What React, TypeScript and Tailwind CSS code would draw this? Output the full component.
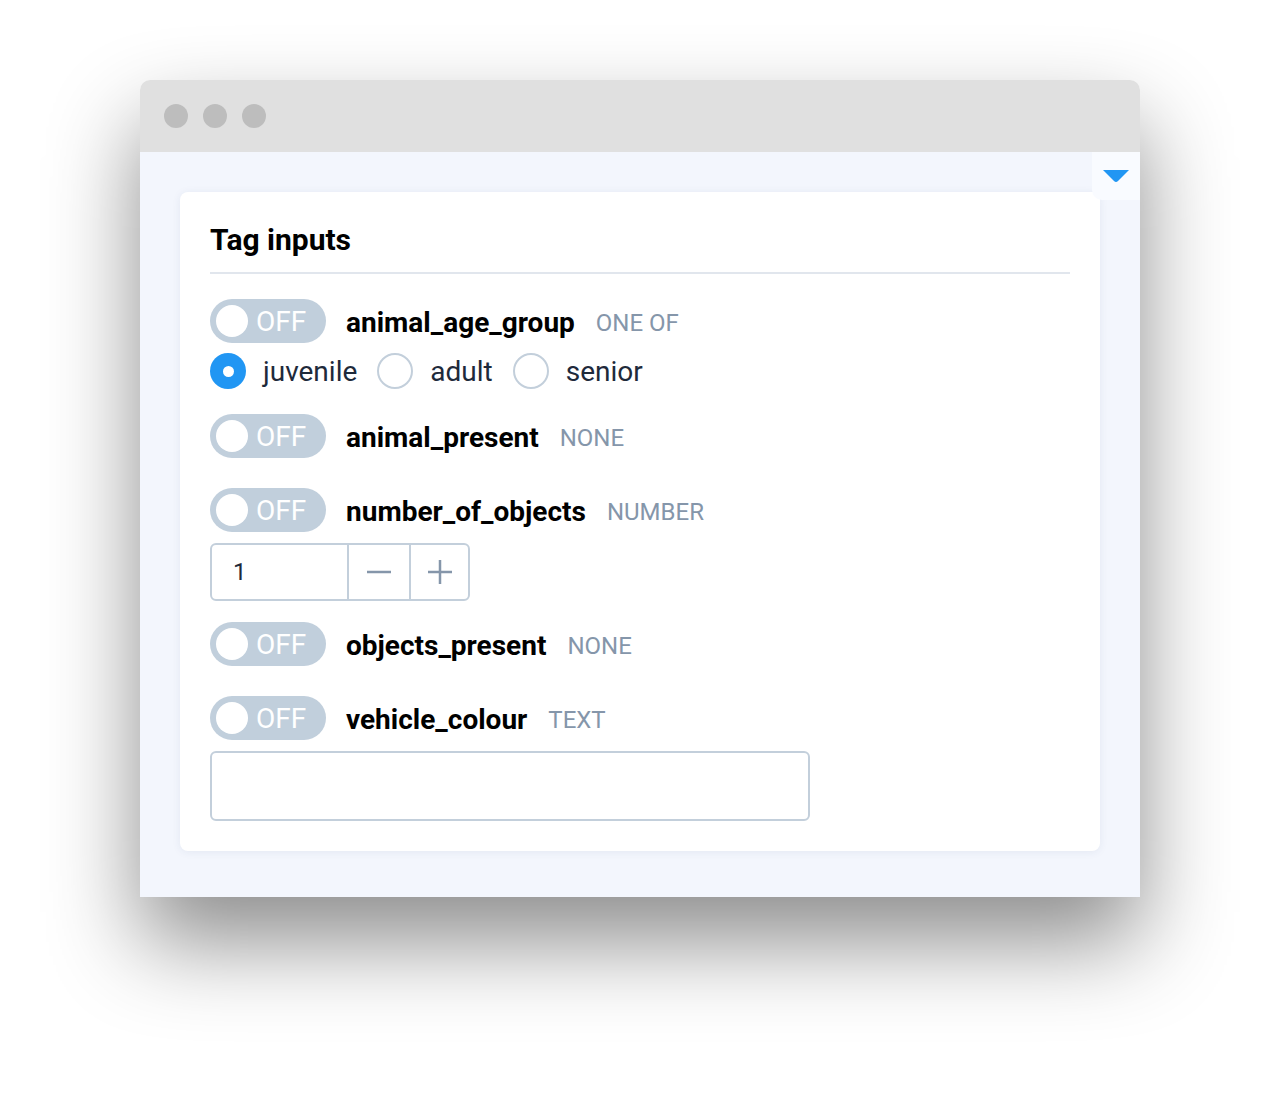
import React from "react";

const Toggle = () => (
  <div className="flex items-center w-[116px] h-[44px] rounded-full bg-[#c1cfdc] pl-[6px] shrink-0">
    <div className="w-[32px] h-[32px] rounded-full bg-white" />
    <span className="ml-[8px] mt-[1px] text-[28px] leading-none text-white">OFF</span>
  </div>
);

const TagHeader = ({ name, kind }: { name: string; kind: string }) => (
  <div className="flex items-center">
    <Toggle />
    <span className="ml-[20px] mt-[3px] text-[28px] font-bold text-black leading-none">{name}</span>
    <span className="ml-[21px] mt-[3px] text-[24px] text-[#8596aa] leading-none uppercase">{kind}</span>
  </div>
);

const Radio = ({ label, checked }: { label: string; checked?: boolean }) => (
  <label className="flex items-center">
    {checked ? (
      <span className="w-[36px] h-[36px] rounded-full bg-[#2196f3] flex items-center justify-center">
        <span className="w-[11px] h-[11px] rounded-full bg-white" />
      </span>
    ) : (
      <span className="w-[36px] h-[36px] rounded-full border-2 border-[#c3cfdb] bg-white" />
    )}
    <span className="ml-[17px] mt-[1px] text-[28px] text-[#1e2a3b] leading-none">{label}</span>
  </label>
);

export default function App() {
  return (
    <div className="min-h-[1098px] bg-white pt-[80px] pl-[140px] font-['Roboto',sans-serif]">
      <div className="w-[1000px] shadow-[0_45px_90px_rgba(0,0,0,0.45)] rounded-t-[10px]">
        <div className="h-[72px] bg-[#e0e0e0] rounded-t-[10px] flex items-center pl-[24px] gap-[15px]">
          <span className="w-[24px] h-[24px] rounded-full bg-[#bdbdbd]" />
          <span className="w-[24px] h-[24px] rounded-full bg-[#bdbdbd]" />
          <span className="w-[24px] h-[24px] rounded-full bg-[#bdbdbd]" />
        </div>
        <div className="relative bg-[#f3f6fd] pt-[40px] px-[40px] pb-[46px]">
          <div className="absolute top-0 right-0 w-[48px] h-[48px] bg-[#f9fbff] rounded-bl-[10px] flex items-center justify-center">
            <svg width="28" height="16" viewBox="0 0 28 16">
              <path d="M1 2 L27 2 L16 13 Q14 15 12 13 Z" fill="#2196f3" />
            </svg>
          </div>
          <div className="bg-white rounded-[8px] shadow-[0_1px_8px_rgba(40,60,110,0.08)] pt-[30px] px-[30px] pb-[30px]">
            <h2 className="text-[30px] leading-[36px] font-bold text-black">Tag inputs</h2>
            <div className="mt-[14px] h-[2px] bg-[#e1e6ed]" />

            <div className="mt-[25px]">
              <TagHeader name="animal_age_group" kind="One of" />
              <div className="mt-[10px] flex items-center gap-[20px]">
                <Radio label="juvenile" checked />
                <Radio label="adult" />
                <Radio label="senior" />
              </div>
            </div>

            <div className="mt-[25px]">
              <TagHeader name="animal_present" kind="None" />
            </div>

            <div className="mt-[30px]">
              <TagHeader name="number_of_objects" kind="Number" />
              <div className="mt-[11px] flex w-[260px] h-[58px] border-2 border-[#c3cfdb] rounded-[6px]">
                <div className="w-[135px] flex items-center pl-[21px] text-[24px] text-[#1e2a3b]">1</div>
                <button className="w-[62px] border-l-2 border-[#c3cfdb] flex items-center justify-center">
                  <svg width="28" height="28" viewBox="0 0 28 28">
                    <path d="M2 14 H26" stroke="#8596aa" strokeWidth="2.5" />
                  </svg>
                </button>
                <button className="flex-1 border-l-2 border-[#c3cfdb] flex items-center justify-center">
                  <svg width="28" height="28" viewBox="0 0 28 28">
                    <path d="M2 14 H26 M14 2 V26" stroke="#8596aa" strokeWidth="2.5" />
                  </svg>
                </button>
              </div>
            </div>

            <div className="mt-[21px]">
              <TagHeader name="objects_present" kind="None" />
            </div>

            <div className="mt-[30px]">
              <TagHeader name="vehicle_colour" kind="Text" />
              <input
                type="text"
                className="mt-[11px] block w-[600px] h-[70px] border-2 border-[#c3cfdb] rounded-[6px] px-4 text-[24px] outline-none"
              />
            </div>
          </div>
        </div>
      </div>
    </div>
  );
}
